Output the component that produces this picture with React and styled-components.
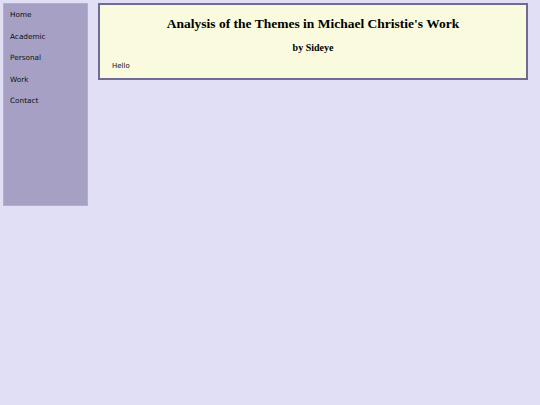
import React from 'react';
import styled, { createGlobalStyle } from 'styled-components';

const GlobalStyle = createGlobalStyle`
  html, body {
    margin: 0;
    padding: 0;
    background: #e1dff5;
  }
  body {
    font-family: 'DejaVu Sans', sans-serif;
  }
`;

const Page = styled.div`
  display: flex;
  align-items: flex-start;
  gap: 10px;
  padding: 3px 12px 3px 3px;
`;

const Sidebar = styled.nav`
  flex-shrink: 0;
  box-sizing: content-box;
  width: 77px;
  height: 197px;
  padding: 4px 0 0 6px;
  background: #a5a0c4;
  border: 1px solid #b3aed0;
  display: flex;
  flex-direction: column;
  gap: 8px;
`;

const NavLink = styled.a`
  font-size: 7.3px;
  line-height: 13.5px;
  color: #111;
  text-decoration: none;
`;

const Main = styled.main`
  flex: 1;
  background: #fafade;
  border: 2px solid #6f6b92;
  padding: 0 12px 8px;
`;

const Title = styled.h1`
  margin: 11px 0 0;
  text-align: center;
  font-family: 'Liberation Serif', serif;
  font-size: 13.5px;
  line-height: 15.5px;
  font-weight: bold;
  color: #000;
`;

const Byline = styled.h2`
  margin: 10px 0 0;
  text-align: center;
  font-family: 'Liberation Serif', serif;
  font-size: 10px;
  line-height: 11.5px;
  font-weight: bold;
  color: #000;
`;

const Body = styled.p`
  margin: 9px 0 0;
  font-size: 7px;
  line-height: 8.2px;
  color: #111;
`;

const links = ['Home', 'Academic', 'Personal', 'Work', 'Contact'];

export default function App() {
  return (
    <>
      <GlobalStyle />
      <Page>
        <Sidebar>
          {links.map((l) => (
            <NavLink key={l} href="#">{l}</NavLink>
          ))}
        </Sidebar>
        <Main>
          <Title>Analysis of the Themes in Michael Christie's Work</Title>
          <Byline>by Sideye</Byline>
          <Body>Hello</Body>
        </Main>
      </Page>
    </>
  );
}
